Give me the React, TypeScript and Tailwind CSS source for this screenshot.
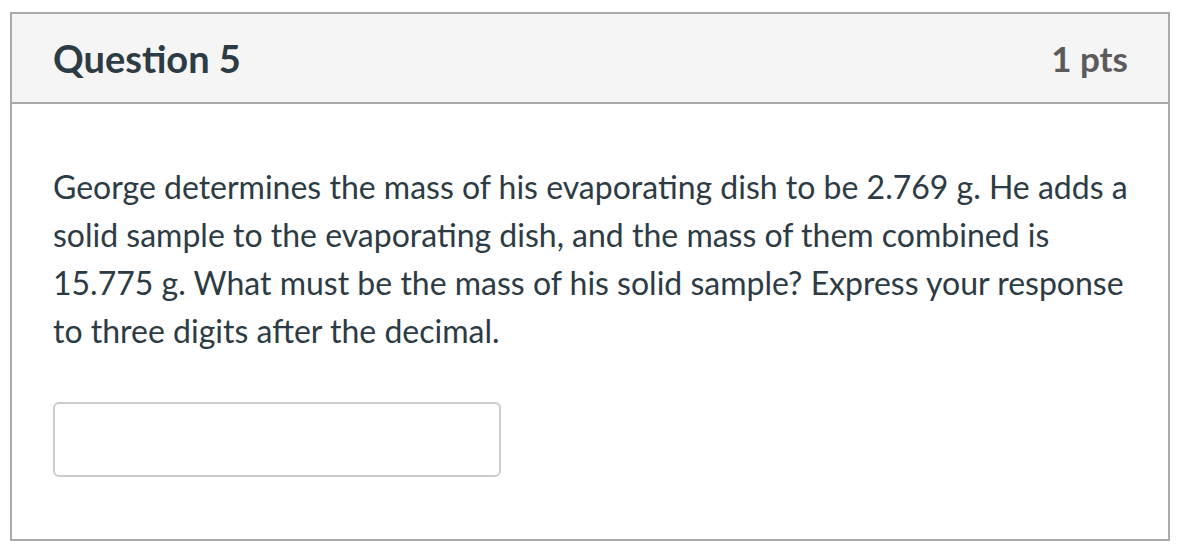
export default function App() {
  return (
    <div className="w-[1182px] h-[556px] bg-white pl-[10px] pt-[12px]" style={{ fontFamily: "Lato, 'Open Sans', sans-serif" }}>
      <div className="w-[1160px] border-2 border-[#aaaaaa] bg-white">
        <div className="h-[90px] bg-[#f5f5f5] border-b-2 border-[#aaaaaa] flex items-center justify-between pl-[41px] pr-[40px]">
          <h2 className="text-[38px] font-bold text-[#2d3b45]">Question 5</h2>
          <div className="text-[35px] font-bold text-[#5b5b5b]">1 pts</div>
        </div>
        <div className="pl-[41px] pr-[40px] pt-[59px] pb-[62px]">
          <p className="text-[32px] leading-[48px] text-[#2d3b45]">
            George determines the mass of his evaporating dish to be 2.769 g. He adds a solid sample to the evaporating dish, and the mass of them combined is 15.775 g. What must be the mass of his solid sample? Express your response to three digits after the decimal.
          </p>
          <input
            type="text"
            className="mt-[47px] block w-[448px] h-[75px] border-2 border-[#cccccc] rounded-[6px] bg-white outline-none"
          />
        </div>
      </div>
    </div>
  );
}
